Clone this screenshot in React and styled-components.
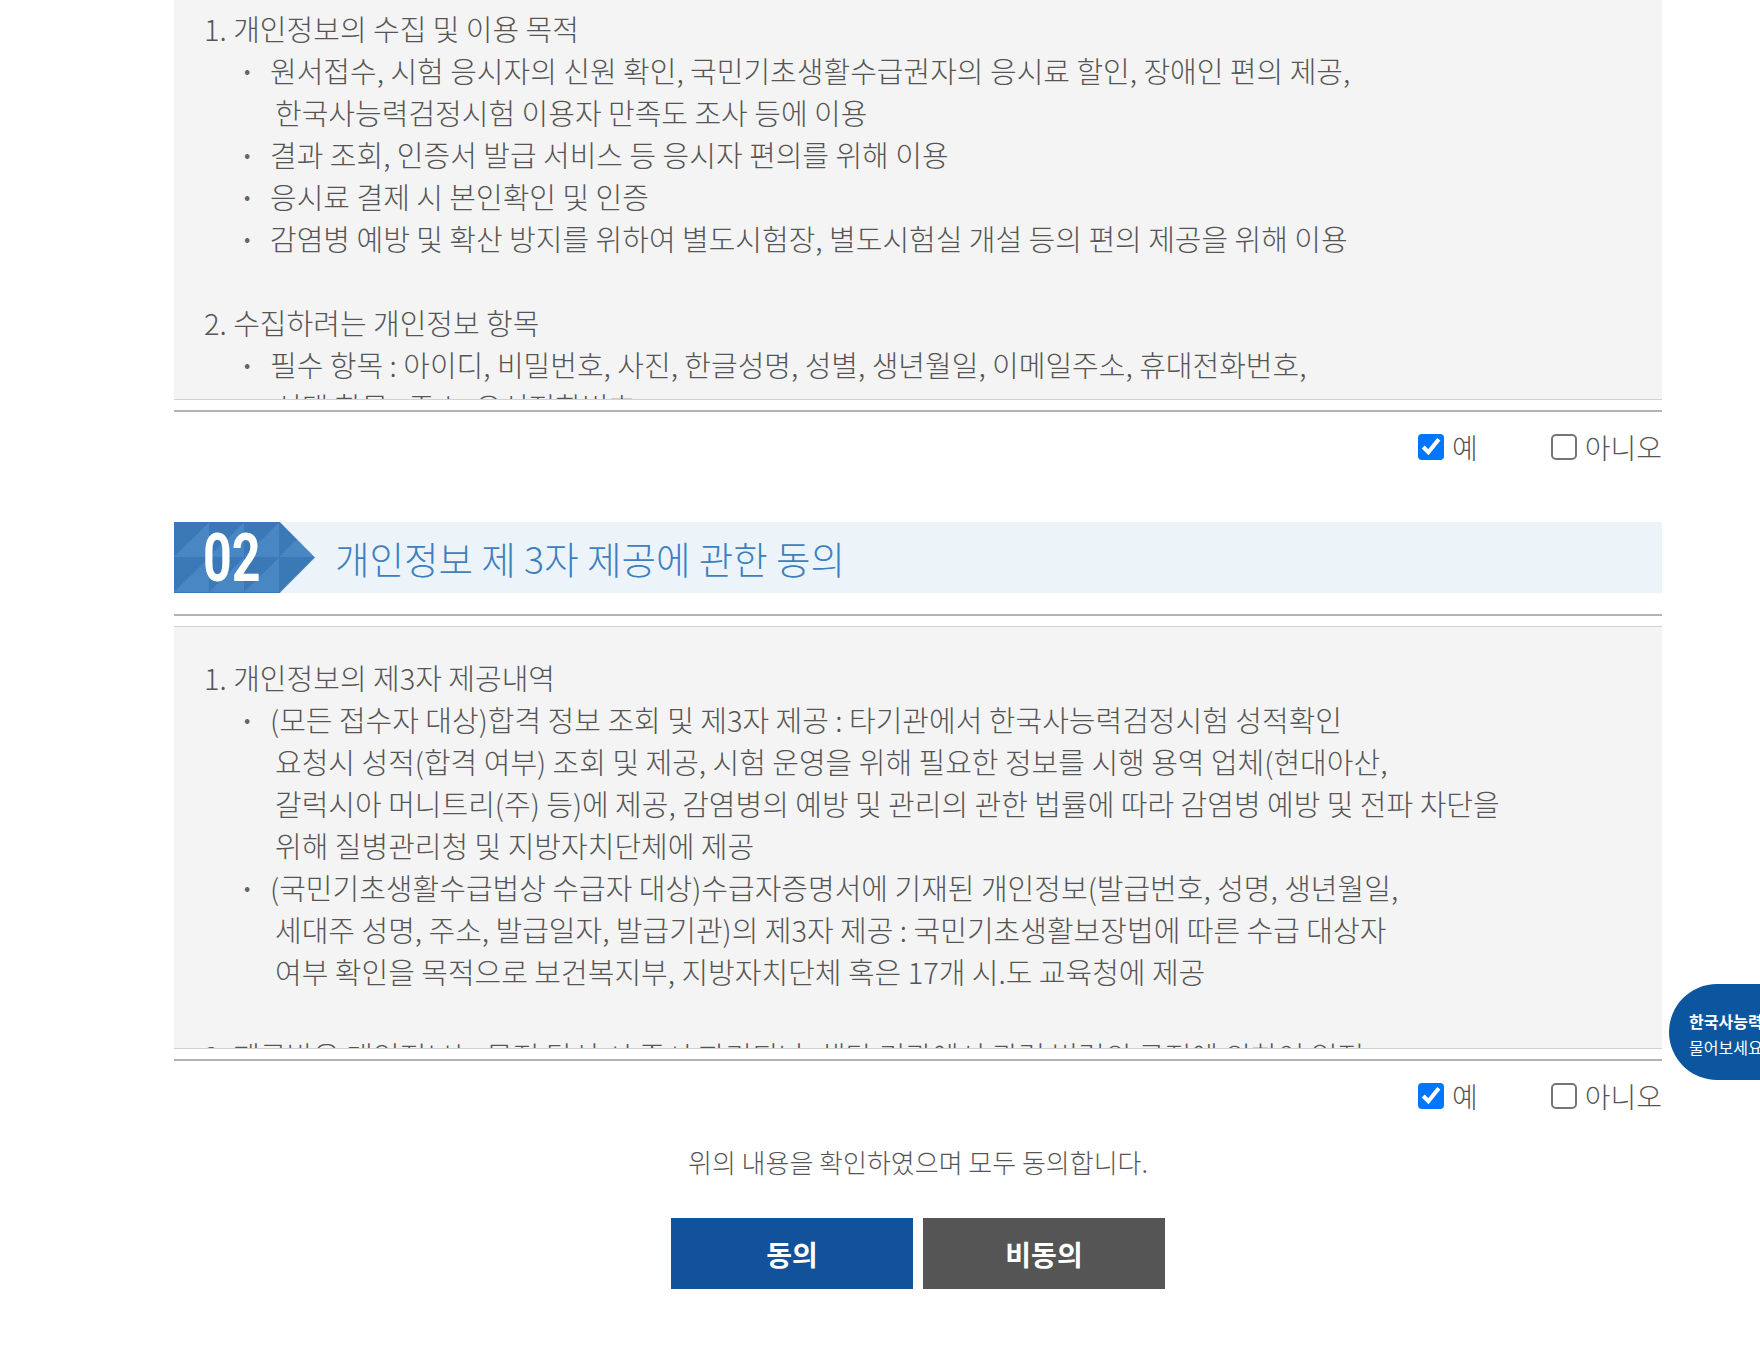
import React from "react";
import styled, { createGlobalStyle } from "styled-components";

const GlobalStyle = createGlobalStyle`
  body {
    margin: 0;
    background: #fff;
    font-family: "Noto Sans CJK KR", "Noto Sans", sans-serif;
  }
`;

const terms1 = [
  { type: "num", text: "1. 개인정보의 수집 및 이용 목적" },
  {
    type: "bullet",
    lines: [
      "원서접수, 시험 응시자의 신원 확인, 국민기초생활수급권자의 응시료 할인, 장애인 편의 제공,",
      "한국사능력검정시험 이용자 만족도 조사 등에 이용",
    ],
  },
  { type: "bullet", lines: ["결과 조회, 인증서 발급 서비스 등 응시자 편의를 위해 이용"] },
  { type: "bullet", lines: ["응시료 결제 시 본인확인 및 인증"] },
  {
    type: "bullet",
    lines: ["감염병 예방 및 확산 방지를 위하여 별도시험장, 별도시험실 개설 등의 편의 제공을 위해 이용"],
  },
  { type: "gap" },
  { type: "num", text: "2. 수집하려는 개인정보 항목" },
  {
    type: "bullet",
    lines: [
      "필수 항목 : 아이디, 비밀번호, 사진, 한글성명, 성별, 생년월일, 이메일주소, 휴대전화번호,",
      "선택 항목 : 주소, 유선전화번호",
    ],
  },
];

const terms2 = [
  { type: "num", text: "1. 개인정보의 제3자 제공내역" },
  {
    type: "bullet",
    lines: [
      "(모든 접수자 대상)합격 정보 조회 및 제3자 제공 : 타기관에서 한국사능력검정시험 성적확인",
      "요청시 성적(합격 여부) 조회 및 제공, 시험 운영을 위해 필요한 정보를 시행 용역 업체(현대아산,",
      "갈럭시아 머니트리(주) 등)에 제공, 감염병의 예방 및 관리의 관한 법률에 따라 감염병 예방 및 전파 차단을",
      "위해 질병관리청 및 지방자치단체에 제공",
    ],
  },
  {
    type: "bullet",
    lines: [
      "(국민기초생활수급법상 수급자 대상)수급자증명서에 기재된 개인정보(발급번호, 성명, 생년월일,",
      "세대주 성명, 주소, 발급일자, 발급기관)의 제3자 제공 : 국민기초생활보장법에 따른 수급 대상자",
      "여부 확인을 목적으로 보건복지부, 지방자치단체 혹은 17개 시.도 교육청에 제공",
    ],
  },
  { type: "gap" },
  {
    type: "num",
    text: "2. 제공받은 개인정보는 목적 달성 시 즉시 파기되나, 해당 기관에서 관련 법령의 규정에 의하여 일정",
  },
  { type: "num", text: "   기간 보관할 수 있습니다." },
];

function Terms({ items }) {
  return (
    <TermsFrame>
      <TermsBox>
        {items.map((it, i) => {
          if (it.type === "gap") return <Gap key={i} />;
          if (it.type === "num") return <Numbered key={i}>{it.text}</Numbered>;
          return (
            <Bullet key={i}>
              <Dot>•</Dot>
              <BulletText>
                {it.lines.map((l, j) => (
                  <div key={j}>{l}</div>
                ))}
              </BulletText>
            </Bullet>
          );
        })}
      </TermsBox>
    </TermsFrame>
  );
}

function Choice() {
  return (
    <ChoiceRow>
      <Option>
        <Check type="checkbox" defaultChecked />
        <span>예</span>
      </Option>
      <Option>
        <Check type="checkbox" />
        <span>아니오</span>
      </Option>
    </ChoiceRow>
  );
}

export default function App() {
  return (
    <>
      <GlobalStyle />
      <Page>
        <FirstSection>
          <Terms items={terms1} />
          <Choice />
        </FirstSection>

        <SectionHead>
          <NumBadge>
            <NumText>02</NumText>
          </NumBadge>
          <HeadTitle>개인정보 제 3자 제공에 관한 동의</HeadTitle>
        </SectionHead>

        <SecondSection>
          <Terms items={terms2} />
          <Choice />
        </SecondSection>

        <AgreeText>위의 내용을 확인하였으며 모두 동의합니다.</AgreeText>
        <ButtonRow>
          <ActionButton $bg="#11529b">동의</ActionButton>
          <ActionButton $bg="#555555">비동의</ActionButton>
        </ButtonRow>
      </Page>

      <ChatBadge>
        <strong>한국사능력검정시험</strong>
        <span>물어보세요</span>
      </ChatBadge>
    </>
  );
}

const Page = styled.div`
  width: 1488px;
  margin-left: 174px;
  padding-bottom: 77px;
`;

const FirstSection = styled.section`
  margin-top: -35px;
`;

const SecondSection = styled.section`
  margin-top: 21px;
`;

const TermsFrame = styled.div`
  border-top: 2px solid #b3b3b3;
  border-bottom: 2px solid #b3b3b3;
  padding: 10px 0;
`;

const TermsBox = styled.div`
  box-sizing: border-box;
  height: 423px;
  overflow: hidden;
  background: #f4f4f4;
  border-top: 1px solid #d2d2d2;
  border-bottom: 1px solid #d2d2d2;
  padding: 29px 30px 30px;
  color: #555;
  font-size: 29px;
  font-weight: 300;
  line-height: 42px;
  white-space: pre;
`;

const Gap = styled.div`
  height: 42px;
`;

const Numbered = styled.div``;

const Bullet = styled.div`
  display: flex;
  padding-left: 40px;
`;

const Dot = styled.span`
  flex: 0 0 26px;
  font-size: 20px;
  color: #666;
`;

const BulletText = styled.div`
  padding-left: 5px;

  & > div:first-child {
    margin-left: -5px;
  }
`;

const ChoiceRow = styled.div`
  display: flex;
  justify-content: flex-end;
  align-items: center;
  gap: 73px;
  padding-top: 22px;
`;

const Option = styled.label`
  display: flex;
  align-items: center;
  gap: 8px;
  font-size: 28px;
  font-weight: 300;
  line-height: 26px;
  color: #555;
`;

const Check = styled.input`
  zoom: 2;
  width: 13px;
  height: 13px;
  margin: 0;
  accent-color: #0075ff;
`;

const SectionHead = styled.div`
  display: flex;
  align-items: center;
  height: 71px;
  margin-top: 62px;
  background: #ecf4fa;
`;

const NumBadge = styled.div`
  box-sizing: border-box;
  flex: 0 0 141px;
  height: 71px;
  display: flex;
  align-items: center;
  padding: 3px 0 0 29px;
  background-color: #3e7fc0;
  background-image: linear-gradient(
    135deg,
    rgba(0, 0, 0, 0.05) 50%,
    rgba(255, 255, 255, 0.06) 50%
  );
  background-size: 35px 35px;
  clip-path: polygon(0 0, 75% 0, 100% 50%, 75% 100%, 0 100%);
`;

const NumText = styled.span`
  font-family: Roboto, "Liberation Sans", sans-serif;
  font-weight: 700;
  font-size: 66px;
  line-height: 1;
  color: #fff;
  transform: scaleX(0.76);
  transform-origin: left center;
`;

const HeadTitle = styled.h2`
  margin: 0 0 0 20px;
  font-size: 37.5px;
  font-weight: 300;
  color: #3e7fc0;
`;

const AgreeText = styled.p`
  margin: 33px 0 0;
  text-align: center;
  font-size: 26px;
  font-weight: 300;
  line-height: 40px;
  color: #555;
`;

const ButtonRow = styled.div`
  display: flex;
  justify-content: center;
  gap: 10px;
  margin-top: 36px;
`;

const ActionButton = styled.button`
  width: 242px;
  height: 71px;
  border: none;
  background: ${(p) => p.$bg};
  color: #fff;
  font-family: "Noto Sans CJK KR", sans-serif;
  font-size: 28px;
  font-weight: 700;
  cursor: pointer;
`;

const ChatBadge = styled.div`
  position: fixed;
  left: 1669px;
  top: 984px;
  box-sizing: border-box;
  width: 200px;
  height: 96px;
  border-radius: 48px 0 0 48px;
  background: #0c559f;
  color: #fff;
  display: flex;
  flex-direction: column;
  justify-content: center;
  padding: 4px 0 0 20px;
  font-size: 16px;
  line-height: 26px;
  white-space: nowrap;

  strong {
    font-weight: 700;
  }
`;
